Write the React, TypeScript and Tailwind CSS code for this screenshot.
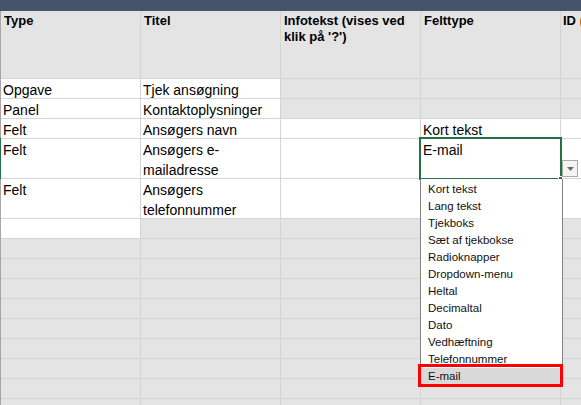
import * as React from 'react'

type Row = { h: string; cells: { text?: string[]; white?: boolean }[] }

const G = false
const W = true

const rows: Row[] = [
  {
    h: 'h-[20px]',
    cells: [
      { text: ['Opgave'], white: W },
      { text: ['Tjek ansøgning'], white: W },
      { white: G },
      { white: G },
      { white: G },
    ],
  },
  {
    h: 'h-[20px]',
    cells: [
      { text: ['Panel'], white: W },
      { text: ['Kontaktoplysninger'], white: W },
      { white: G },
      { white: G },
      { white: G },
    ],
  },
  {
    h: 'h-[20px]',
    cells: [
      { text: ['Felt'], white: W },
      { text: ['Ansøgers navn'], white: W },
      { white: W },
      { text: ['Kort tekst'], white: W },
      { white: W },
    ],
  },
  {
    h: 'h-[40px]',
    cells: [
      { text: ['Felt'], white: W },
      { text: ['Ansøgers e-', 'mailadresse'], white: W },
      { white: W },
      { text: ['E-mail'], white: W },
      { white: W },
    ],
  },
  {
    h: 'h-[40px]',
    cells: [
      { text: ['Felt'], white: W },
      { text: ['Ansøgers', 'telefonnummer'], white: W },
      { white: W },
      { white: W },
      { white: W },
    ],
  },
  {
    h: 'h-[20px]',
    cells: [{ white: W }, { white: G }, { white: G }, { white: G }, { white: G }],
  },
]

const emptyRows = Array.from({ length: 9 }, (_, i) => i)

const options = [
  'Kort tekst',
  'Lang tekst',
  'Tjekboks',
  'Sæt af tjekbokse',
  'Radioknapper',
  'Dropdown-menu',
  'Heltal',
  'Decimaltal',
  'Dato',
  'Vedhæftning',
  'Telefonnummer',
  'E-mail',
]

const headers = ['Type', 'Titel', "Infotekst (vises ved klik på '?')", 'Felttype']

export default function App() {
  return (
    <div className="relative h-screen w-screen overflow-hidden bg-[#e4e4e4] font-['Liberation_Sans',Arial,sans-serif] text-black">
      <div className="h-[11px] bg-[#44546a]" />

      <div className="border-l border-[#a6a6a6]">
        {/* header row */}
        <div className="flex h-[68px]">
          {headers.map((h) => (
            <div
              key={h}
              className="w-[140px] shrink-0 border-r border-b border-[#d4d4d4] px-[3px] pt-[2px] text-[13px] font-bold leading-[16px]"
            >
              {h}
            </div>
          ))}
          <div className="w-[140px] shrink-0 whitespace-nowrap border-r border-b border-[#d4d4d4] pl-[2px] pt-[2px] text-[13px] font-bold leading-[16px]">
            ID<span className="text-[#c65911]"> (udfyldes automatisk)</span>
          </div>
        </div>

        {rows.map((r, i) => (
          <div key={i} className={`flex ${r.h}`}>
            {r.cells.map((c, j) => (
              <div
                key={j}
                className={`w-[140px] shrink-0 border-r border-b border-[#d4d4d4] pl-[2px] pt-px text-[14px] leading-[20px] ${
                  c.white ? 'bg-white' : 'bg-[#e4e4e4]'
                }`}
              >
                {c.text?.map((t) => (
                  <div key={t}>{t}</div>
                ))}
              </div>
            ))}
          </div>
        ))}

        {emptyRows.map((i) => (
          <div key={i} className="flex h-[20px]">
            {[0, 1, 2, 3, 4].map((j) => (
              <div key={j} className="w-[140px] shrink-0 border-r border-b border-[#d4d4d4]" />
            ))}
          </div>
        ))}
      </div>

      {/* row selection marker */}
      <div className="absolute left-0 top-[138px] h-[41px] w-px bg-[#217346]" />

      {/* selected cell */}
      <div className="absolute left-[419px] top-[137px] h-[43px] w-[143px] border-2 border-[#217346]" />
      <div className="absolute left-[558px] top-[176px] h-[5px] w-[5px] border border-white bg-[#217346]" />

      {/* dropdown button */}
      <div className="absolute left-[562px] top-[160px] flex h-[17px] w-[16px] items-center justify-center border border-[#ababab] bg-[#f4f4f4]">
        <svg width="7" height="4" viewBox="0 0 7 4">
          <path d="M0 0h7L3.5 4z" fill="#6b6b6b" />
        </svg>
      </div>

      {/* dropdown list */}
      <div className="absolute left-[420px] top-[179px] w-[143px] border-x border-b border-[#828282] bg-white pt-[2px]">
        {options.map((o, i) => (
          <div
            key={o}
            className={`h-[17px] pl-[7px] text-[11.5px] leading-[17px] text-[#111] ${
              i === options.length - 1 ? 'bg-[#d9d9d9]' : ''
            }`}
          >
            {o}
          </div>
        ))}
      </div>

      {/* red highlight */}
      <div className="absolute left-[418px] top-[364px] h-[23px] w-[145px] border-[3px] border-[#ff0000]" />
    </div>
  )
}
